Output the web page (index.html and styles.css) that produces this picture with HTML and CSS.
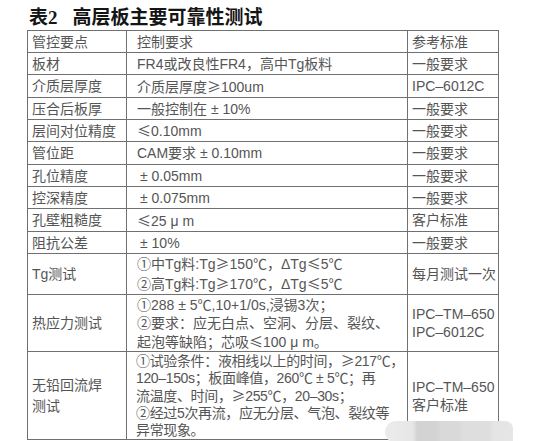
FILE: index.html
```html
<!DOCTYPE html>
<html lang="zh-CN">
<head>
<meta charset="utf-8">
<link rel="stylesheet" href="styles.css">
</head>
<body>
<div class="page">
  <h1 class="title">表2<span class="title-main">高层板主要可靠性测试</span></h1>
  <table class="spec">
    <colgroup>
      <col class="c1">
      <col class="c2">
      <col class="c3">
    </colgroup>
    <tbody>
      <tr class="r22"><td>管控要点</td><td class="mid">控制要求</td><td>参考标准</td></tr>
      <tr class="r22"><td>板材</td><td class="mid">FR4或改良性FR4，高中Tg板料</td><td>一般要求</td></tr>
      <tr class="r23"><td>介质层厚度</td><td class="mid">介质层厚度<span class="sym">≥</span>100um</td><td>IPC–6012C</td></tr>
      <tr class="r22"><td>压合后板厚</td><td class="mid">一般控制在 ± 10%</td><td>一般要求</td></tr>
      <tr class="r22"><td>层间对位精度</td><td class="mid"><span class="sym">≤</span>0.10mm</td><td>一般要求</td></tr>
      <tr class="r23"><td>管位距</td><td class="mid">CAM要求 ± 0.10mm</td><td>一般要求</td></tr>
      <tr class="r22"><td>孔位精度</td><td class="mid ind">± 0.05mm</td><td>一般要求</td></tr>
      <tr class="r22"><td>控深精度</td><td class="mid ind">± 0.075mm</td><td>一般要求</td></tr>
      <tr class="r23"><td>孔壁粗糙度</td><td class="mid"><span class="sym">≤</span>25 μ m</td><td>客户标准</td></tr>
      <tr class="r22"><td>阻抗公差</td><td class="mid ind">± 10%</td><td>一般要求</td></tr>
      <tr class="rtg"><td>Tg测试</td><td class="mid lh19">①中Tg料:Tg<span class="sym">≥</span>150℃，ΔTg<span class="sym">≤</span>5℃<br>②高Tg料:Tg<span class="sym">≥</span>170℃，ΔTg<span class="sym">≤</span>5℃</td><td>每月测试一次</td></tr>
      <tr class="rheat"><td>热应力测试</td><td class="mid lh18">①288 ± 5℃,10+1/0s,浸锡3次；<br>②要求：应无白点、空洞、分层、裂纹、<br>起泡等缺陷；芯吸<span class="sym">≤</span>100 μ m。</td><td class="lh18">IPC–TM–650<br>IPC–6012C</td></tr>
      <tr class="rlead"><td class="lh21">无铅回流焊<br>测试</td><td class="mid lh17 tight">①试验条件：液相线以上的时间，<span class="sym">≥</span>217℃，<br>120–150s；板面峰值，260℃ ± 5℃；再<br>流温度、时间，<span class="sym">≥</span>255℃，20–30s；<br>②经过5次再流，应无分层、气泡、裂纹等<br>异常现象。</td><td class="lh18">IPC–TM–650<br>客户标准</td></tr>
    </tbody>
  </table>
  <div class="watermark"></div>
</div>
</body>
</html>
```

FILE: styles.css
```css
html, body {
  margin: 0;
  padding: 0;
  background: #ffffff;
}

.page {
  position: relative;
  width: 559px;
  height: 441px;
  overflow: hidden;
}

.title {
  margin: 0;
  height: 30px;
  padding-left: 29px;
  display: flex;
  align-items: center;
  font-family: "Liberation Serif", "Noto Sans CJK SC", serif;
  font-weight: 700;
  font-size: 19px;
  color: #151515;
}

.title-main {
  margin-left: 15px;
  font-family: "Noto Sans CJK SC", sans-serif;
  font-weight: 700;
}

.spec {
  margin-left: 27px;
  width: 471px;
  border-collapse: collapse;
  table-layout: fixed;
  font-family: "Liberation Sans", "Noto Sans CJK SC", sans-serif;
  font-size: 14px;
  color: #555555;
  border: 1.5px solid #6a6a6a;
}

.c1 { width: 99px; }
.c2 { width: 281px; }
.c3 { width: 91px; }

.spec td {
  border: 1px solid #707070;
  padding: 0 0 0 4px;
  white-space: nowrap;
  vertical-align: middle;
  line-height: 16px;
  overflow: hidden;
}

.spec td.mid {
  padding-left: 10px;
}

.spec td.ind {
  padding-left: 13px;
}

.spec td.tight {
  padding-left: 9px;
  letter-spacing: -0.35px;
}

.sym {
  font-family: "Noto Sans CJK SC", sans-serif;
}

.r22 { height: 22px; }
.r23 { height: 23px; }
.rtg { height: 40px; }
.rheat { height: 57px; }
.rlead { height: 87px; }

.spec td.lh17 { line-height: 17px; }
.spec td.lh18 { line-height: 18px; }
.spec td.lh19 { line-height: 19px; }
.spec td.lh21 { line-height: 21px; }

.watermark {
  position: absolute;
  left: 385px;
  top: 421px;
  width: 128px;
  height: 22px;
  border-radius: 11px 8px 0 11px;
  background: linear-gradient(to right,
    #ececec 0px, #e6e6e6 28px,
    #d3d3d3 32px, #d3d3d3 52px,
    #d9d9d9 56px, #d9d9d9 74px,
    #dedede 78px, #dedede 104px,
    #e4e4e4 108px, #e6e6e6 128px);
  filter: blur(0.6px);
}
```
